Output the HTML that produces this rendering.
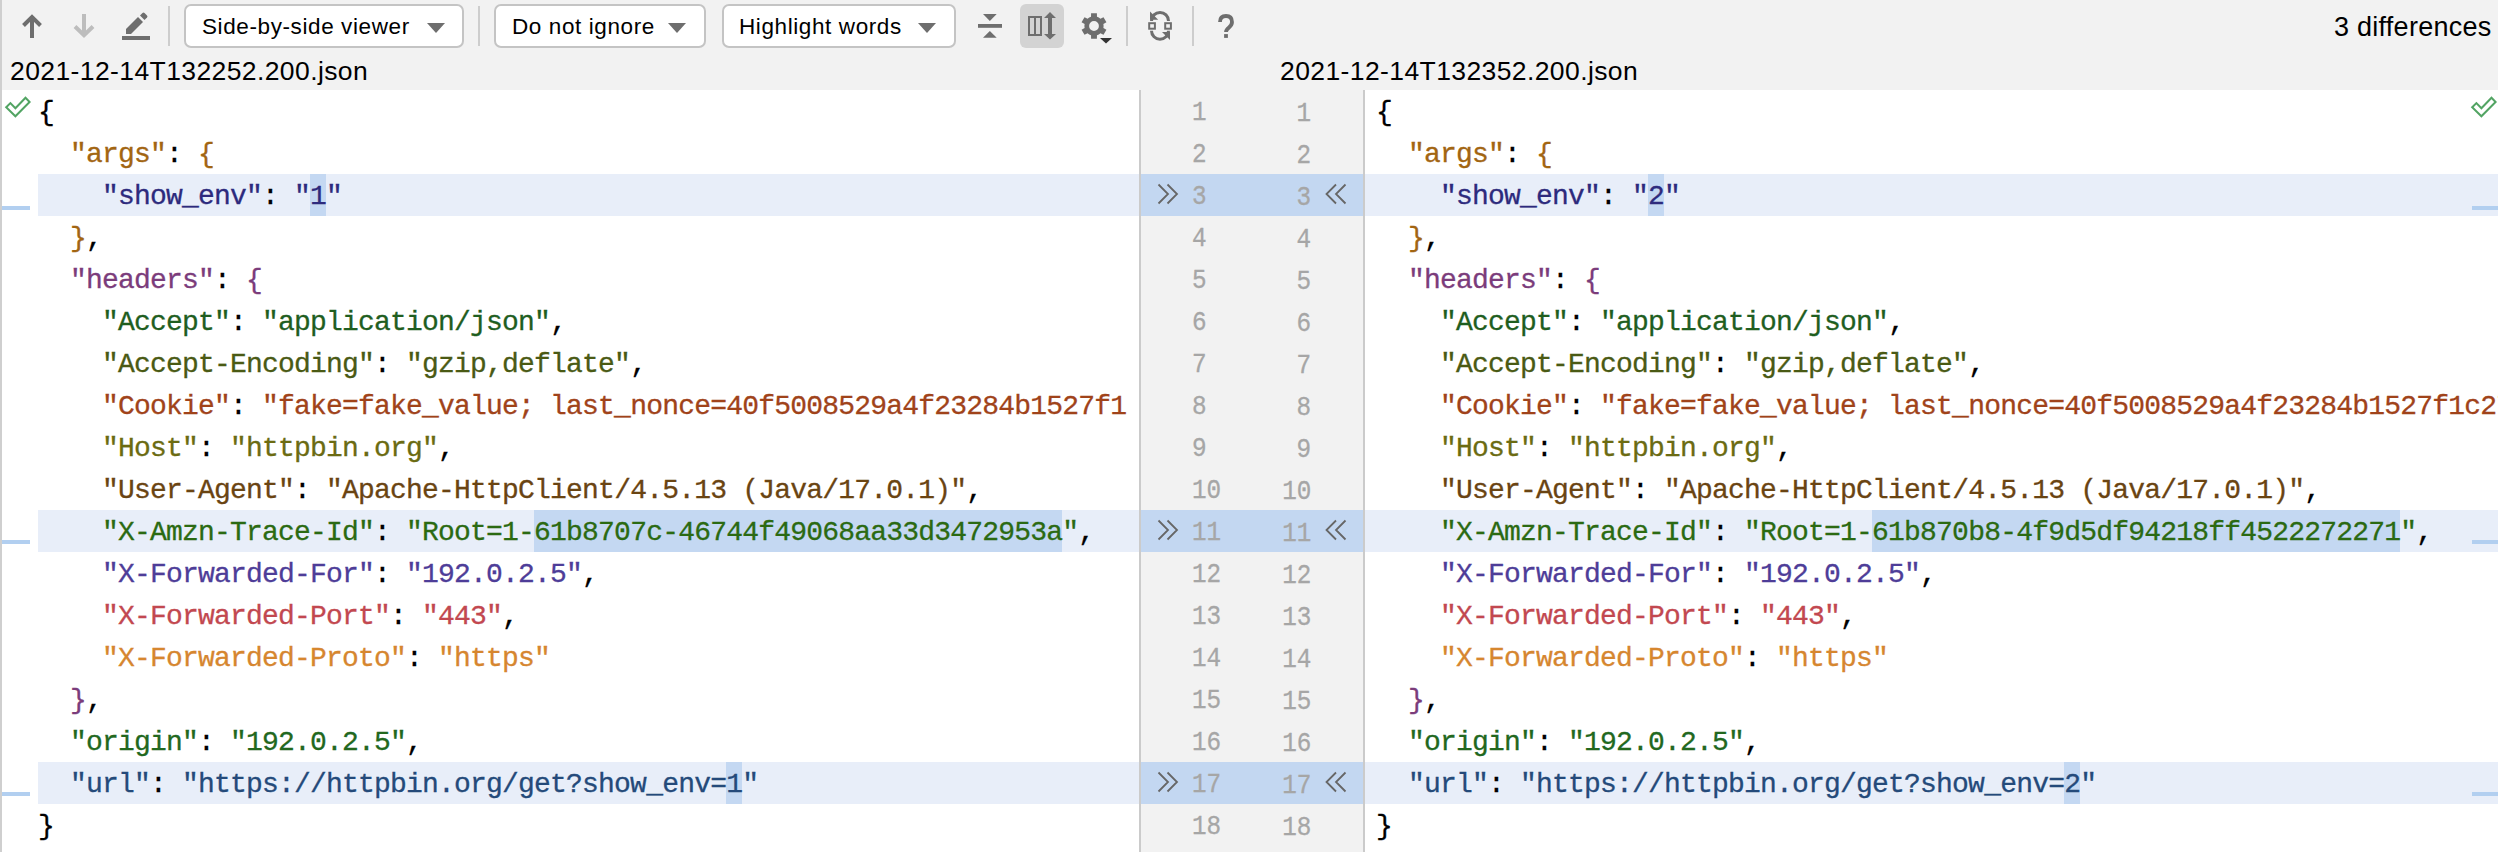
<!DOCTYPE html>
<html><head><meta charset="utf-8"><style>
*{margin:0;padding:0;box-sizing:border-box}
html,body{width:2498px;height:852px;overflow:hidden;background:#F2F2F2}
body{position:relative;font-family:"Liberation Sans",sans-serif}
.abs{position:absolute}
.code{position:absolute;top:90px;font-family:"Liberation Mono",monospace;font-size:28px;line-height:42px;white-space:pre;overflow:hidden;letter-spacing:-0.8px;-webkit-text-stroke:0.3px currentColor}
.ln{height:42px;position:relative;top:1.5px}
.w{background:#C4D8F2}
.dd{position:absolute;top:4px;height:44px;border:2px solid #C4C4C4;border-radius:7px;background:#fff;font-size:22.5px;letter-spacing:0.6px;color:#000}
.dd span{position:absolute;top:8px;white-space:pre}
.tri{position:absolute;width:0;height:0;border-left:9.5px solid transparent;border-right:9.5px solid transparent;border-top:10px solid #6E6E6E;top:17px}
.sep{position:absolute;top:6px;width:2px;height:40px;background:#CDCDCD}
.gn{position:absolute;font-family:"Liberation Mono",monospace;font-size:27px;color:#A6A6A6;line-height:42px;white-space:pre;-webkit-text-stroke:0.3px currentColor}
</style></head>
<body>
<div class="abs" style="left:2px;top:90px;width:1137px;height:762px;background:#fff"></div>
<div class="abs" style="left:1365px;top:90px;width:1133px;height:762px;background:#fff"></div>
<div class="abs" style="left:1139px;top:90px;width:2px;height:762px;background:#CBCBCB"></div>
<div class="abs" style="left:1363px;top:90px;width:2px;height:762px;background:#CBCBCB"></div>
<div class="abs" style="left:0;top:0;width:2px;height:852px;background:#CFCFCF"></div>
<div class="abs" style="left:38px;top:174px;width:1101px;height:42px;background:#E8EEF9"></div>
<div class="abs" style="left:1141px;top:174px;width:222px;height:42px;background:#C3D7F1"></div>
<div class="abs" style="left:1365px;top:174px;width:1133px;height:42px;background:#E8EEF9"></div>
<div class="abs" style="left:2px;top:206px;width:28px;height:4px;background:#B2CFF0"></div>
<div class="abs" style="left:2472px;top:206px;width:26px;height:4px;background:#B2CFF0"></div>
<svg class="abs" style="left:1150px;top:174px" width="40" height="42" viewBox="0 0 40 42"><path d="M8.5 10.5 L18 20 L8.5 29.5 M17.5 10.5 L27 20 L17.5 29.5" fill="none" stroke="#666" stroke-width="1.8"/></svg>
<svg class="abs" style="left:1320px;top:174px" width="40" height="42" viewBox="0 0 40 42"><path d="M16 10.5 L6.5 20 L16 29.5 M25.5 10.5 L16 20 L25.5 29.5" fill="none" stroke="#666" stroke-width="1.8"/></svg>
<div class="abs" style="left:38px;top:510px;width:1101px;height:42px;background:#E8EEF9"></div>
<div class="abs" style="left:1141px;top:510px;width:222px;height:42px;background:#C3D7F1"></div>
<div class="abs" style="left:1365px;top:510px;width:1133px;height:42px;background:#E8EEF9"></div>
<div class="abs" style="left:2px;top:540px;width:28px;height:4px;background:#B2CFF0"></div>
<div class="abs" style="left:2472px;top:540px;width:26px;height:4px;background:#B2CFF0"></div>
<svg class="abs" style="left:1150px;top:510px" width="40" height="42" viewBox="0 0 40 42"><path d="M8.5 10.5 L18 20 L8.5 29.5 M17.5 10.5 L27 20 L17.5 29.5" fill="none" stroke="#666" stroke-width="1.8"/></svg>
<svg class="abs" style="left:1320px;top:510px" width="40" height="42" viewBox="0 0 40 42"><path d="M16 10.5 L6.5 20 L16 29.5 M25.5 10.5 L16 20 L25.5 29.5" fill="none" stroke="#666" stroke-width="1.8"/></svg>
<div class="abs" style="left:38px;top:762px;width:1101px;height:42px;background:#E8EEF9"></div>
<div class="abs" style="left:1141px;top:762px;width:222px;height:42px;background:#C3D7F1"></div>
<div class="abs" style="left:1365px;top:762px;width:1133px;height:42px;background:#E8EEF9"></div>
<div class="abs" style="left:2px;top:792px;width:28px;height:4px;background:#B2CFF0"></div>
<div class="abs" style="left:2472px;top:792px;width:26px;height:4px;background:#B2CFF0"></div>
<svg class="abs" style="left:1150px;top:762px" width="40" height="42" viewBox="0 0 40 42"><path d="M8.5 10.5 L18 20 L8.5 29.5 M17.5 10.5 L27 20 L17.5 29.5" fill="none" stroke="#666" stroke-width="1.8"/></svg>
<svg class="abs" style="left:1320px;top:762px" width="40" height="42" viewBox="0 0 40 42"><path d="M16 10.5 L6.5 20 L16 29.5 M25.5 10.5 L16 20 L25.5 29.5" fill="none" stroke="#666" stroke-width="1.8"/></svg>
<div class="abs" style="left:310px;top:174px;width:16px;height:42px;background:#C4D8F2"></div>
<div class="abs" style="left:534px;top:510px;width:528px;height:42px;background:#C4D8F2"></div>
<div class="abs" style="left:726px;top:762px;width:16px;height:42px;background:#C4D8F2"></div>
<div class="abs" style="left:1648px;top:174px;width:16px;height:42px;background:#C4D8F2"></div>
<div class="abs" style="left:1872px;top:510px;width:528px;height:42px;background:#C4D8F2"></div>
<div class="abs" style="left:2064px;top:762px;width:16px;height:42px;background:#C4D8F2"></div>
<div class="code" style="left:38px;width:1089px;height:762px"><div class="ln"><span style="color:#000000">{</span></div><div class="ln"><span style="">  </span><span style="color:#A26512">&quot;args&quot;</span><span style="color:#000000">: </span><span style="color:#A26512">{</span></div><div class="ln"><span style="">    </span><span style="color:#2D2A7D">&quot;show_env&quot;</span><span style="color:#000000">: </span><span style="color:#2D2A7D">&quot;</span><span style="color:#2D2A7D">1</span><span style="color:#2D2A7D">&quot;</span></div><div class="ln"><span style="">  </span><span style="color:#A26512">}</span><span style="color:#000000">,</span></div><div class="ln"><span style="">  </span><span style="color:#7B3C7B">&quot;headers&quot;</span><span style="color:#000000">: </span><span style="color:#7B3C7B">{</span></div><div class="ln"><span style="">    </span><span style="color:#1F5E1F">&quot;Accept&quot;</span><span style="color:#000000">: </span><span style="color:#1F5E1F">&quot;application/json&quot;</span><span style="color:#000000">,</span></div><div class="ln"><span style="">    </span><span style="color:#4A5A14">&quot;Accept-Encoding&quot;</span><span style="color:#000000">: </span><span style="color:#4A5A14">&quot;gzip,deflate&quot;</span><span style="color:#000000">,</span></div><div class="ln"><span style="">    </span><span style="color:#A0431A">&quot;Cookie&quot;</span><span style="color:#000000">: </span><span style="color:#A0431A">&quot;fake=fake_value; last_nonce=40f5008529a4f23284b1527f1c27</span></div><div class="ln"><span style="">    </span><span style="color:#6B6B12">&quot;Host&quot;</span><span style="color:#000000">: </span><span style="color:#6B6B12">&quot;httpbin.org&quot;</span><span style="color:#000000">,</span></div><div class="ln"><span style="">    </span><span style="color:#6A4412">&quot;User-Agent&quot;</span><span style="color:#000000">: </span><span style="color:#6A4412">&quot;Apache-HttpClient/4.5.13 (Java/17.0.1)&quot;</span><span style="color:#000000">,</span></div><div class="ln"><span style="">    </span><span style="color:#2B6A12">&quot;X-Amzn-Trace-Id&quot;</span><span style="color:#000000">: </span><span style="color:#2B6A12">&quot;Root=1-</span><span style="color:#2B6A12">61b8707c-46744f49068aa33d3472953a</span><span style="color:#2B6A12">&quot;</span><span style="color:#000000">,</span></div><div class="ln"><span style="">    </span><span style="color:#4E3D98">&quot;X-Forwarded-For&quot;</span><span style="color:#000000">: </span><span style="color:#4E3D98">&quot;192.0.2.5&quot;</span><span style="color:#000000">,</span></div><div class="ln"><span style="">    </span><span style="color:#C24850">&quot;X-Forwarded-Port&quot;</span><span style="color:#000000">: </span><span style="color:#C24850">&quot;443&quot;</span><span style="color:#000000">,</span></div><div class="ln"><span style="">    </span><span style="color:#D6862F">&quot;X-Forwarded-Proto&quot;</span><span style="color:#000000">: </span><span style="color:#D6862F">&quot;https&quot;</span></div><div class="ln"><span style="">  </span><span style="color:#7B3C7B">}</span><span style="color:#000000">,</span></div><div class="ln"><span style="">  </span><span style="color:#22681E">&quot;origin&quot;</span><span style="color:#000000">: </span><span style="color:#22681E">&quot;192.0.2.5&quot;</span><span style="color:#000000">,</span></div><div class="ln"><span style="">  </span><span style="color:#244A7A">&quot;url&quot;</span><span style="color:#000000">: </span><span style="color:#244A7A">&quot;https://httpbin.org/get?show_env=</span><span style="color:#244A7A">1</span><span style="color:#244A7A">&quot;</span></div><div class="ln"><span style="color:#000000">}</span></div></div>
<div class="code" style="left:1376px;width:1122px;height:762px"><div class="ln"><span style="color:#000000">{</span></div><div class="ln"><span style="">  </span><span style="color:#A26512">&quot;args&quot;</span><span style="color:#000000">: </span><span style="color:#A26512">{</span></div><div class="ln"><span style="">    </span><span style="color:#2D2A7D">&quot;show_env&quot;</span><span style="color:#000000">: </span><span style="color:#2D2A7D">&quot;</span><span style="color:#2D2A7D">2</span><span style="color:#2D2A7D">&quot;</span></div><div class="ln"><span style="">  </span><span style="color:#A26512">}</span><span style="color:#000000">,</span></div><div class="ln"><span style="">  </span><span style="color:#7B3C7B">&quot;headers&quot;</span><span style="color:#000000">: </span><span style="color:#7B3C7B">{</span></div><div class="ln"><span style="">    </span><span style="color:#1F5E1F">&quot;Accept&quot;</span><span style="color:#000000">: </span><span style="color:#1F5E1F">&quot;application/json&quot;</span><span style="color:#000000">,</span></div><div class="ln"><span style="">    </span><span style="color:#4A5A14">&quot;Accept-Encoding&quot;</span><span style="color:#000000">: </span><span style="color:#4A5A14">&quot;gzip,deflate&quot;</span><span style="color:#000000">,</span></div><div class="ln"><span style="">    </span><span style="color:#A0431A">&quot;Cookie&quot;</span><span style="color:#000000">: </span><span style="color:#A0431A">&quot;fake=fake_value; last_nonce=40f5008529a4f23284b1527f1c27</span></div><div class="ln"><span style="">    </span><span style="color:#6B6B12">&quot;Host&quot;</span><span style="color:#000000">: </span><span style="color:#6B6B12">&quot;httpbin.org&quot;</span><span style="color:#000000">,</span></div><div class="ln"><span style="">    </span><span style="color:#6A4412">&quot;User-Agent&quot;</span><span style="color:#000000">: </span><span style="color:#6A4412">&quot;Apache-HttpClient/4.5.13 (Java/17.0.1)&quot;</span><span style="color:#000000">,</span></div><div class="ln"><span style="">    </span><span style="color:#2B6A12">&quot;X-Amzn-Trace-Id&quot;</span><span style="color:#000000">: </span><span style="color:#2B6A12">&quot;Root=1-</span><span style="color:#2B6A12">61b870b8-4f9d5df94218ff4522272271</span><span style="color:#2B6A12">&quot;</span><span style="color:#000000">,</span></div><div class="ln"><span style="">    </span><span style="color:#4E3D98">&quot;X-Forwarded-For&quot;</span><span style="color:#000000">: </span><span style="color:#4E3D98">&quot;192.0.2.5&quot;</span><span style="color:#000000">,</span></div><div class="ln"><span style="">    </span><span style="color:#C24850">&quot;X-Forwarded-Port&quot;</span><span style="color:#000000">: </span><span style="color:#C24850">&quot;443&quot;</span><span style="color:#000000">,</span></div><div class="ln"><span style="">    </span><span style="color:#D6862F">&quot;X-Forwarded-Proto&quot;</span><span style="color:#000000">: </span><span style="color:#D6862F">&quot;https&quot;</span></div><div class="ln"><span style="">  </span><span style="color:#7B3C7B">}</span><span style="color:#000000">,</span></div><div class="ln"><span style="">  </span><span style="color:#22681E">&quot;origin&quot;</span><span style="color:#000000">: </span><span style="color:#22681E">&quot;192.0.2.5&quot;</span><span style="color:#000000">,</span></div><div class="ln"><span style="">  </span><span style="color:#244A7A">&quot;url&quot;</span><span style="color:#000000">: </span><span style="color:#244A7A">&quot;https://httpbin.org/get?show_env=</span><span style="color:#244A7A">2</span><span style="color:#244A7A">&quot;</span></div><div class="ln"><span style="color:#000000">}</span></div></div>
<div class="gn" style="left:1192px;top:91.5px;transform:scaleX(0.9);transform-origin:0 0">1</div>
<div class="gn" style="right:1187px;top:92.5px;text-align:right;transform:scaleX(0.9);transform-origin:100% 0">1</div>
<div class="gn" style="left:1192px;top:133.5px;transform:scaleX(0.9);transform-origin:0 0">2</div>
<div class="gn" style="right:1187px;top:134.5px;text-align:right;transform:scaleX(0.9);transform-origin:100% 0">2</div>
<div class="gn" style="left:1192px;top:175.5px;transform:scaleX(0.9);transform-origin:0 0">3</div>
<div class="gn" style="right:1187px;top:176.5px;text-align:right;transform:scaleX(0.9);transform-origin:100% 0">3</div>
<div class="gn" style="left:1192px;top:217.5px;transform:scaleX(0.9);transform-origin:0 0">4</div>
<div class="gn" style="right:1187px;top:218.5px;text-align:right;transform:scaleX(0.9);transform-origin:100% 0">4</div>
<div class="gn" style="left:1192px;top:259.5px;transform:scaleX(0.9);transform-origin:0 0">5</div>
<div class="gn" style="right:1187px;top:260.5px;text-align:right;transform:scaleX(0.9);transform-origin:100% 0">5</div>
<div class="gn" style="left:1192px;top:301.5px;transform:scaleX(0.9);transform-origin:0 0">6</div>
<div class="gn" style="right:1187px;top:302.5px;text-align:right;transform:scaleX(0.9);transform-origin:100% 0">6</div>
<div class="gn" style="left:1192px;top:343.5px;transform:scaleX(0.9);transform-origin:0 0">7</div>
<div class="gn" style="right:1187px;top:344.5px;text-align:right;transform:scaleX(0.9);transform-origin:100% 0">7</div>
<div class="gn" style="left:1192px;top:385.5px;transform:scaleX(0.9);transform-origin:0 0">8</div>
<div class="gn" style="right:1187px;top:386.5px;text-align:right;transform:scaleX(0.9);transform-origin:100% 0">8</div>
<div class="gn" style="left:1192px;top:427.5px;transform:scaleX(0.9);transform-origin:0 0">9</div>
<div class="gn" style="right:1187px;top:428.5px;text-align:right;transform:scaleX(0.9);transform-origin:100% 0">9</div>
<div class="gn" style="left:1192px;top:469.5px;transform:scaleX(0.9);transform-origin:0 0">10</div>
<div class="gn" style="right:1187px;top:470.5px;text-align:right;transform:scaleX(0.9);transform-origin:100% 0">10</div>
<div class="gn" style="left:1192px;top:511.5px;transform:scaleX(0.9);transform-origin:0 0">11</div>
<div class="gn" style="right:1187px;top:512.5px;text-align:right;transform:scaleX(0.9);transform-origin:100% 0">11</div>
<div class="gn" style="left:1192px;top:553.5px;transform:scaleX(0.9);transform-origin:0 0">12</div>
<div class="gn" style="right:1187px;top:554.5px;text-align:right;transform:scaleX(0.9);transform-origin:100% 0">12</div>
<div class="gn" style="left:1192px;top:595.5px;transform:scaleX(0.9);transform-origin:0 0">13</div>
<div class="gn" style="right:1187px;top:596.5px;text-align:right;transform:scaleX(0.9);transform-origin:100% 0">13</div>
<div class="gn" style="left:1192px;top:637.5px;transform:scaleX(0.9);transform-origin:0 0">14</div>
<div class="gn" style="right:1187px;top:638.5px;text-align:right;transform:scaleX(0.9);transform-origin:100% 0">14</div>
<div class="gn" style="left:1192px;top:679.5px;transform:scaleX(0.9);transform-origin:0 0">15</div>
<div class="gn" style="right:1187px;top:680.5px;text-align:right;transform:scaleX(0.9);transform-origin:100% 0">15</div>
<div class="gn" style="left:1192px;top:721.5px;transform:scaleX(0.9);transform-origin:0 0">16</div>
<div class="gn" style="right:1187px;top:722.5px;text-align:right;transform:scaleX(0.9);transform-origin:100% 0">16</div>
<div class="gn" style="left:1192px;top:763.5px;transform:scaleX(0.9);transform-origin:0 0">17</div>
<div class="gn" style="right:1187px;top:764.5px;text-align:right;transform:scaleX(0.9);transform-origin:100% 0">17</div>
<div class="gn" style="left:1192px;top:805.5px;transform:scaleX(0.9);transform-origin:0 0">18</div>
<div class="gn" style="right:1187px;top:806.5px;text-align:right;transform:scaleX(0.9);transform-origin:100% 0">18</div>
<svg class="abs" style="left:0;top:0" width="40" height="130" viewBox="0 0 40 130"><path d="M6.2 107.3 L10.4 103.1 L15.4 108.2 L25.5 97.8 L29.6 102 L15.4 116.3 Z" fill="none" stroke="#52A463" stroke-width="2" stroke-linejoin="miter"/></svg>
<svg class="abs" style="left:2466px;top:0" width="40" height="130" viewBox="0 0 40 130"><path d="M6.2 107.3 L10.4 103.1 L15.4 108.2 L25.5 97.8 L29.6 102 L15.4 116.3 Z" fill="none" stroke="#52A463" stroke-width="2" stroke-linejoin="miter"/></svg>
<svg class="abs" style="left:0;top:0" width="1260" height="52" viewBox="0 0 1260 52">
<path d="M32 38 V16 M23.5 25.5 L32 17 L40.5 25.5" fill="none" stroke="#6E6E6E" stroke-width="4"/>
<path d="M84 14 V36 M75 26.5 L84 35.3 L93 26.5" fill="none" stroke="#BDBDBD" stroke-width="4"/>
<path d="M126 29 L138 17 L143 22 L131 34 L126 34 Z" fill="#6E6E6E"/>
<path d="M140 15.5 L142.5 13 Q143.5 12 144.5 13 L147 15.5 Q148 16.5 147 17.5 L144.5 20 Z" fill="#6E6E6E"/>
<rect x="122" y="36" width="28" height="4" fill="#6E6E6E"/>
<path d="M983 14 H996.7 L989.85 21 Z" fill="#6E6E6E"/>
<rect x="978" y="24" width="24" height="3.8" fill="#6E6E6E"/>
<path d="M983 37.8 H996.7 L989.85 31 Z" fill="#6E6E6E"/>
<rect x="1020" y="4" width="44" height="44" rx="6" fill="#D3D3D3"/>
<rect x="1029" y="17" width="12" height="18" fill="none" stroke="#6E6E6E" stroke-width="2"/>
<rect x="1034" y="17" width="2" height="18" fill="#6E6E6E"/>
<path d="M1048 18 V34 H1052 V18 Z M1044 18 L1050 12 L1056 18 Z M1044 34 L1050 39.6 L1056 34 Z" fill="#6E6E6E"/>
<g transform="translate(1094 26)">
<path fill="#6E6E6E" fill-rule="evenodd" d="M-2.97 -9.13 L-2.92 -12.67 L2.92 -12.67 L2.97 -9.13 A9.6 9.6 0 0 1 6.42 -7.13 L6.42 -7.13 L9.51 -8.87 L12.43 -3.80 L9.39 -2.00 A9.6 9.6 0 0 1 9.39 2.00 L9.39 2.00 L12.43 3.80 L9.51 8.87 L6.42 7.13 A9.6 9.6 0 0 1 2.97 9.13 L2.97 9.13 L2.92 12.67 L-2.92 12.67 L-2.97 9.13 A9.6 9.6 0 0 1 -6.42 7.13 L-6.42 7.13 L-9.51 8.87 L-12.43 3.80 L-9.39 2.00 A9.6 9.6 0 0 1 -9.39 -2.00 L-9.39 -2.00 L-12.43 -3.80 L-9.51 -8.87 L-6.42 -7.13 A9.6 9.6 0 0 1 -2.97 -9.13 Z M4.9 0 A4.9 4.9 0 1 0 -4.9 0 A4.9 4.9 0 1 0 4.9 0 Z"/>
</g>
<path d="M1100 38 H1112 L1106 43.6 Z" fill="#333"/>
<g fill="none" stroke="#6E6E6E" stroke-width="3">
<path d="M1151.5 20.9 A8.5 8.5 0 0 1 1168.5 20.9"/>
<path d="M1151.5 30.7 A8.5 8.5 0 0 0 1168.5 30.7"/>
</g>
<path d="M1150 11.6 V19.7 H1158.2 Z" fill="#6E6E6E"/>
<path d="M1170 40.1 V32 H1162 Z" fill="#6E6E6E"/>
<rect x="1149.2" y="23.2" width="5.7" height="5.5" fill="none" stroke="#6E6E6E" stroke-width="2"/>
<rect x="1165.2" y="23.2" width="5.7" height="5.5" fill="none" stroke="#6E6E6E" stroke-width="2"/>
<path d="M1220 22 Q1220 16 1226 16 Q1232 16 1232 22 Q1232 25 1229 27.5 Q1226 30 1226 32" fill="none" stroke="#6E6E6E" stroke-width="3.8"/>
<rect x="1224.1" y="34.1" width="3.8" height="3.8" fill="#6E6E6E"/>
</svg>
<div class="sep" style="left:168px"></div>
<div class="sep" style="left:478px"></div>
<div class="sep" style="left:1126px"></div>
<div class="sep" style="left:1192px"></div>
<div class="dd" style="left:184px;width:280px"><span style="left:16px">Side-by-side viewer</span><div class="tri" style="left:241px"></div></div>
<div class="dd" style="left:494px;width:212px"><span style="left:16px">Do not ignore</span><div class="tri" style="left:172px"></div></div>
<div class="dd" style="left:722px;width:234px"><span style="left:15px">Highlight words</span><div class="tri" style="left:194px"></div></div>
<div class="abs" style="left:2334px;top:12px;font-size:27px;letter-spacing:0.26px;white-space:pre;color:#000">3 differences</div>
<div class="abs" style="left:10px;top:56px;font-size:26.5px;letter-spacing:0.4px;white-space:pre;color:#000">2021-12-14T132252.200.json</div>
<div class="abs" style="left:1280px;top:56px;font-size:26.5px;letter-spacing:0.4px;white-space:pre;color:#000">2021-12-14T132352.200.json</div>
</body></html>
